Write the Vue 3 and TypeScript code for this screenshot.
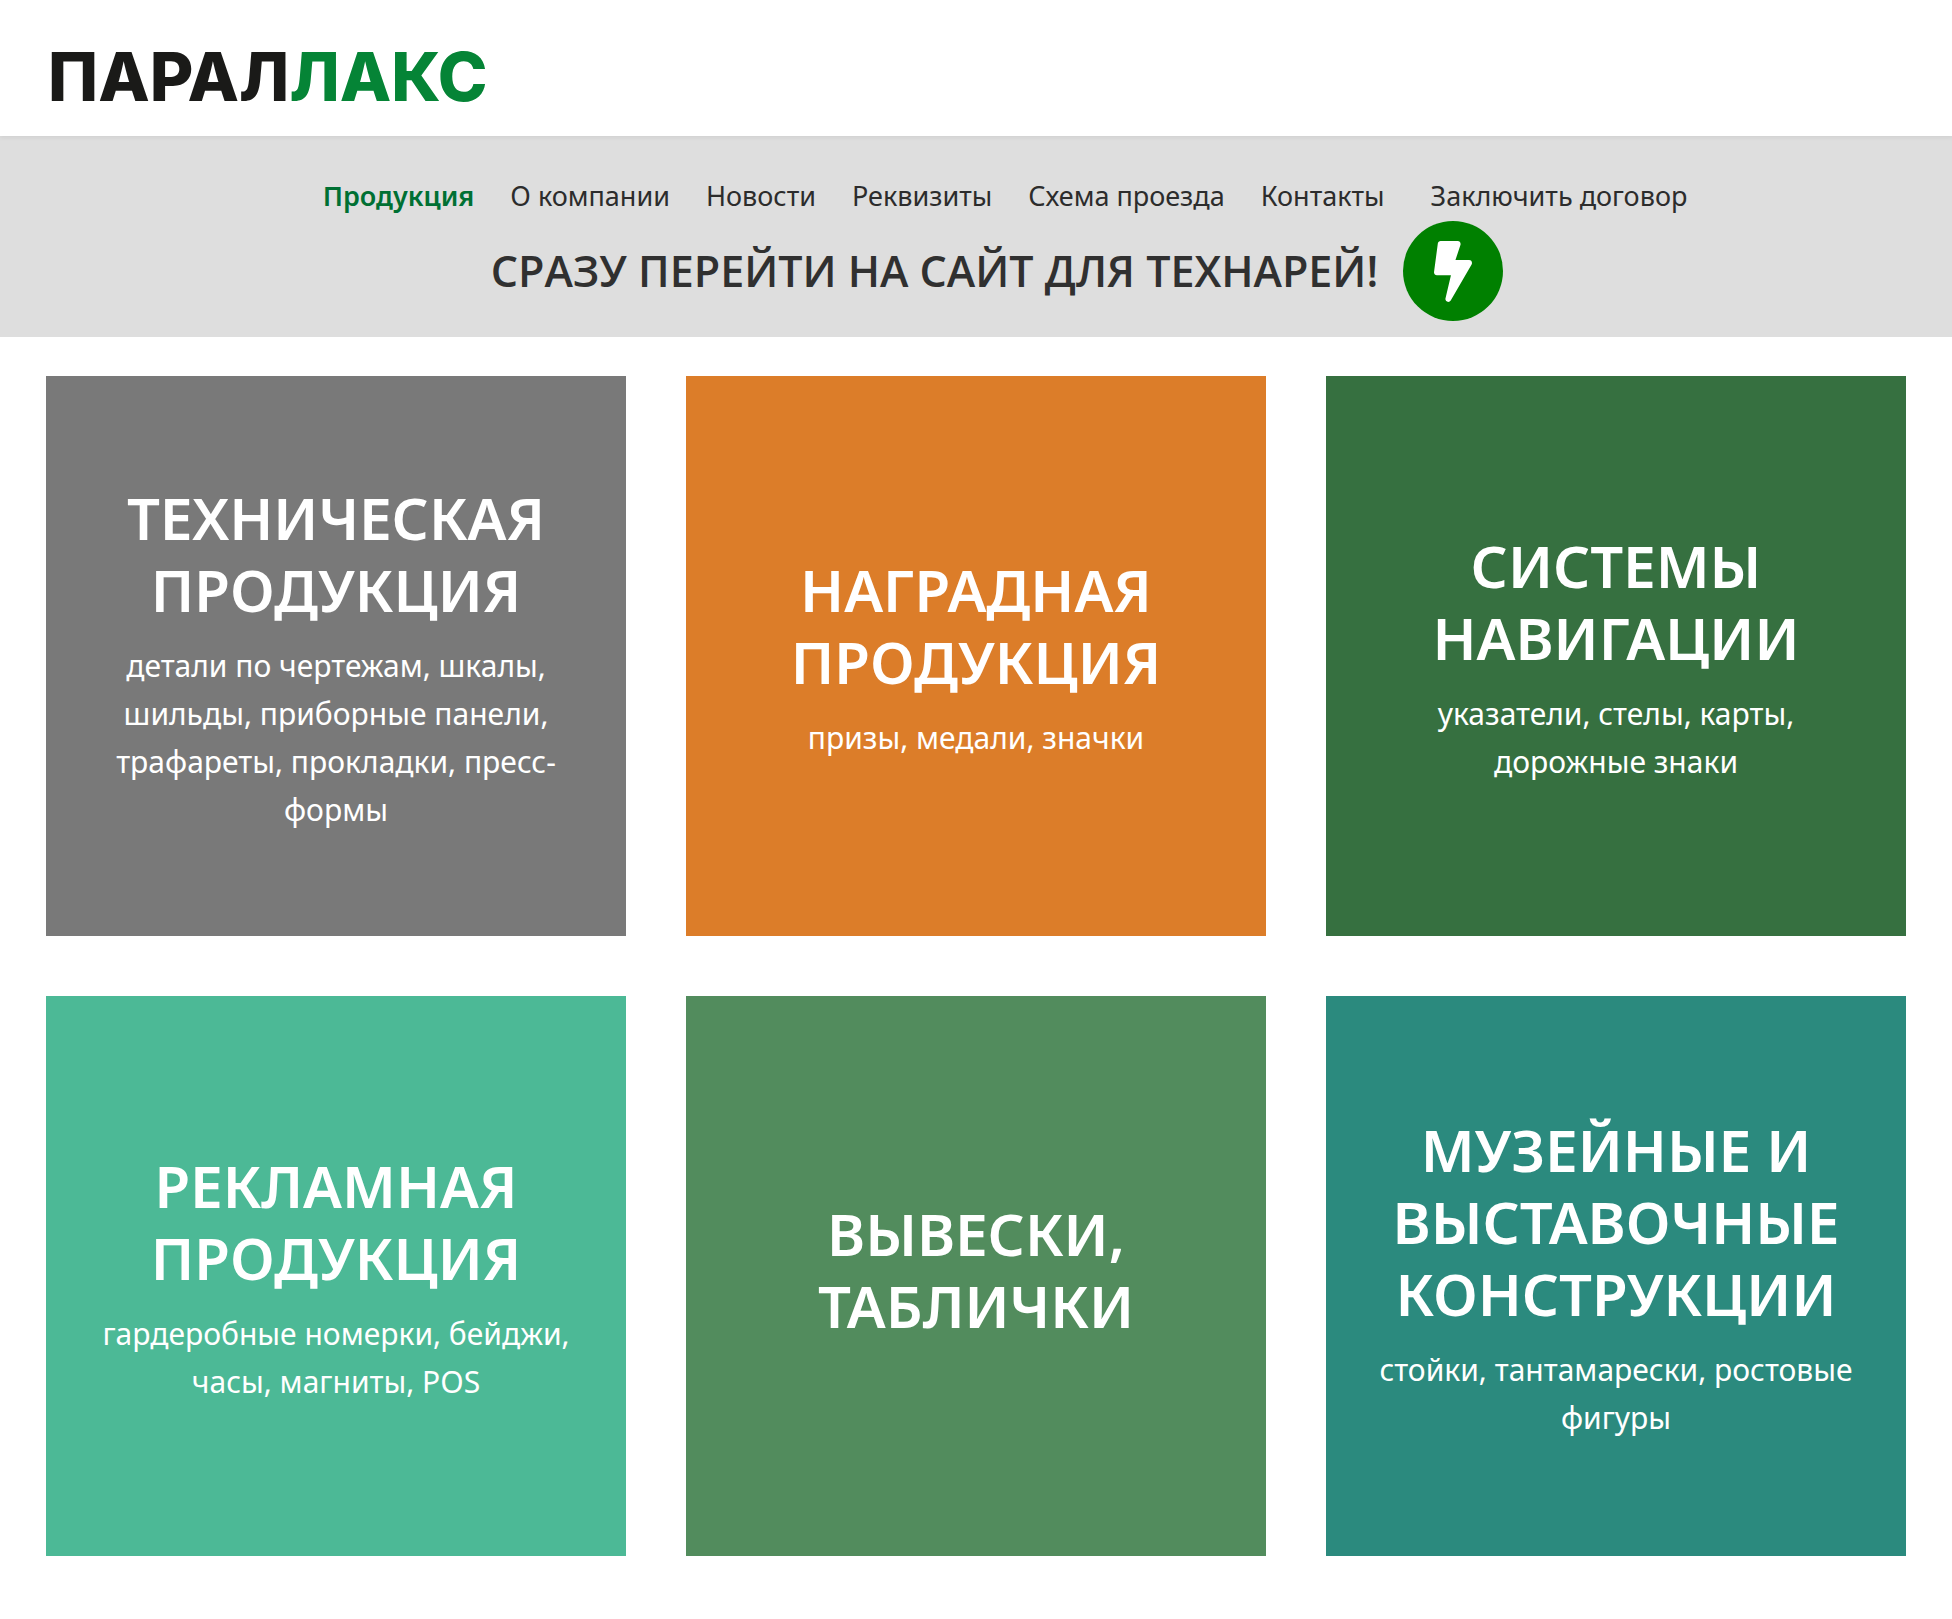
<script setup lang="ts">
interface NavItem {
  label: string
  active?: boolean
  separate?: boolean
}

interface Category {
  title: string
  note?: string
  tone: string
}

const navItems: NavItem[] = [
  { label: 'Продукция', active: true },
  { label: 'О компании' },
  { label: 'Новости' },
  { label: 'Реквизиты' },
  { label: 'Схема проезда' },
  { label: 'Контакты' },
  { label: 'Заключить договор', separate: true },
]

const categories: Category[] = [
  {
    title: 'Техническая продукция',
    note: 'детали по чертежам, шкалы, шильды, приборные панели, трафареты, прокладки, пресс-формы',
    tone: 'gray',
  },
  { title: 'Наградная продукция', note: 'призы, медали, значки', tone: 'orange' },
  { title: 'Системы навигации', note: 'указатели, стелы, карты, дорожные знаки', tone: 'forest' },
  { title: 'Рекламная продукция', note: 'гардеробные номерки, бейджи, часы, магниты, POS', tone: 'mint' },
  { title: 'Вывески, таблички', tone: 'green' },
  { title: 'Музейные и выставочные конструкции', note: 'стойки, тантамарески, ростовые фигуры', tone: 'teal' },
]
</script>

<template>
  <div class="page">
    <header class="header">
      <a class="logo" href="#"><span class="logo-dark">ПАРАЛ</span><span class="logo-green">ЛАКС</span></a>
    </header>

    <div class="bar">
      <nav class="nav">
        <a
          v-for="item in navItems"
          :key="item.label"
          class="nav-link"
          :class="{ active: item.active, separate: item.separate }"
          href="#"
        >{{ item.label }}</a>
      </nav>
      <div class="promo">
        <a class="promo-text" href="#">СРАЗУ ПЕРЕЙТИ НА САЙТ ДЛЯ ТЕХНАРЕЙ!</a>
        <a class="promo-icon" href="#" aria-label="Перейти">
          <svg class="bolt" viewBox="0 0 320 512" aria-hidden="true">
            <path
              fill="currentColor"
              d="M296 160H180.600l42.600-129.800C227.200 15 215.700 0 200 0H56C44 0 33.800 8.900 32.200 20.800l-32 240C-1.700 275.200 9.500 288 24 288h118.700L96.600 482.500c-3.600 15.200 8 29.500 23.300 29.500 8.400 0 16.400-4.400 20.800-12l176-304c9.300-15.900-2.200-36-20.700-36z"
            />
          </svg>
        </a>
      </div>
    </div>

    <main class="grid">
      <a v-for="card in categories" :key="card.title" class="card" :class="card.tone" href="#">
        <h2 class="card-title">{{ card.title }}</h2>
        <p v-if="card.note" class="card-note">{{ card.note }}</p>
      </a>
    </main>
  </div>
</template>

<style>
body {
  margin: 0;
  background: #fff;
}
</style>

<style scoped>
.page {
  font-family: 'Noto Sans', 'Open Sans', sans-serif;
  color: #2c2c2c;
}

a {
  color: inherit;
  text-decoration: none;
}

.header {
  position: relative;
  display: flex;
  padding: 43px 48px 25px;
  background: #fff;
  box-shadow: 0 2px 4px rgba(0, 0, 0, 0.06);
}

.logo {
  font-family: Inter, sans-serif;
  font-size: 67px;
  font-weight: 800;
  line-height: 68px;
}

.logo-dark {
  color: #1a1a18;
}

.logo-green {
  color: #058436;
}

.bar {
  display: flex;
  flex-direction: column;
  gap: 4px;
  padding: 39px 0 16px;
  background: #dedede;
}

.nav {
  display: flex;
  flex-wrap: wrap;
  justify-content: center;
  gap: 0 36px;
  padding-left: 58px;
  font-size: 27px;
  font-weight: 400;
  line-height: 42px;
}

.nav-link.active {
  color: #007033;
  font-weight: 600;
}

.nav-link.separate {
  margin-left: 10px;
}

.promo {
  display: flex;
  align-items: center;
  justify-content: center;
  gap: 25px;
  padding-left: 42px;
}

.promo-text {
  font-family: 'Open Sans', 'Noto Sans', sans-serif;
  font-size: 43px;
  font-weight: 600;
  line-height: 60px;
  color: #303030;
}

.promo-icon {
  display: flex;
  flex: none;
  align-items: center;
  justify-content: center;
  width: 100px;
  height: 100px;
  border-radius: 50%;
  background: #008000;
  color: #fff;
}

.bolt {
  width: 38px;
  height: 61px;
}

.grid {
  display: grid;
  grid-template-columns: repeat(3, 1fr);
  gap: 60px;
  padding: 39px 46px 63px;
}

.card {
  display: flex;
  flex-direction: column;
  justify-content: center;
  box-sizing: border-box;
  min-height: 560px;
  padding: 4px 50px 0;
  color: #fff;
  text-align: center;
}

.card-title {
  margin: 0 0 16px;
  font-size: 58px;
  font-weight: 600;
  line-height: 72px;
  text-transform: uppercase;
}

.card-note {
  margin: 0;
  font-size: 30px;
  line-height: 48px;
}

.gray {
  background: #797979;
}

.orange {
  background: #dc7d29;
}

.forest {
  background: #367040;
}

.mint {
  background: #4cb996;
}

.green {
  background: #528c5d;
}

.teal {
  background: #2b8a7e;
}

@media (max-width: 1700px) {
  .grid {
    grid-template-columns: repeat(2, 1fr);
  }
}

@media (max-width: 1100px) {
  .grid {
    grid-template-columns: 1fr;
  }
}
</style>
